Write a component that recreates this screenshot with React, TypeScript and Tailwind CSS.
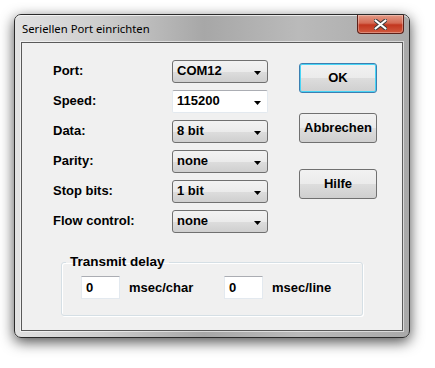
import React from "react";

interface PortRow {
  label: string;
  value: string;
  editable?: boolean;
}

const rows: PortRow[] = [
  { label: "Port:", value: "COM12" },
  { label: "Speed:", value: "115200", editable: true },
  { label: "Data:", value: "8 bit" },
  { label: "Parity:", value: "none" },
  { label: "Stop bits:", value: "1 bit" },
  { label: "Flow control:", value: "none" },
];

const Arrow: React.FC = () => (
  <svg width="7" height="4" viewBox="0 0 7 4" className="absolute right-[6px] top-[10px]">
    <path d="M0 0 H7 L3.5 4 Z" fill="#000" />
  </svg>
);

const Combo: React.FC<{ row: PortRow }> = ({ row }) => (
  <div
    className={
      row.editable
        ? "relative w-[96px] h-[23px] rounded-[2px] border border-[#e3e9ef] border-t-[#abadb3] bg-white pl-[4px] flex items-center"
        : "relative w-[96px] h-[23px] rounded-[3px] border border-[#707070] bg-[linear-gradient(#f2f2f2_0%,#ebebeb_50%,#dddddd_51%,#cfcfcf_100%)] pl-[4px] flex items-center"
    }
  >
    <span>{row.value}</span>
    <Arrow />
  </div>
);

const DlgButton: React.FC<{ label: string; primary?: boolean; className?: string }> = ({
  label,
  primary,
  className,
}) => (
  <button
    className={
      "w-[78px] h-[30px] rounded-[3px] border bg-[linear-gradient(#f2f2f2_0%,#ebebeb_50%,#dddddd_51%,#cfcfcf_100%)] text-center " +
      (primary ? "border-[#3c7fb1] shadow-[inset_0_0_0_1px_#48d4f5] " : "border-[#707070] ") +
      (className || "")
    }
  >
    {label}
  </button>
);

const DelayInput: React.FC<{ value: string }> = ({ value }) => (
  <div className="w-[39px] h-[23px] border border-[#e3e9ef] border-t-[#abadb3] bg-white pl-[4px] flex items-center">
    {value}
  </div>
);

const App: React.FC = () => {
  return (
    <div className="w-[435px] h-[368px] bg-white overflow-hidden pt-[14px] pl-[14px]">
      <div className="w-[396px] h-[324px] rounded-[7px] border border-[#2b2b2b] flex flex-col shadow-[0_4px_14px_rgba(0,0,0,0.7)] bg-[linear-gradient(90deg,#e2e2e2_0%,#cdcdcd_22%,#a7a7a7_48%,#bababa_72%,#a9a9a9_100%)]">
        {/* title bar */}
        <div className="h-[27px] flex justify-between items-start pl-[7px] pr-[5px] shadow-[inset_0_1px_0_rgba(255,255,255,0.7)] rounded-t-[6px]">
          <span className="mt-[6px] text-[11.3px] leading-[16px] text-black [font-family:'Noto_Sans',sans-serif]">
            Seriellen Port einrichten
          </span>
          <div className="w-[47px] h-[19px] rounded-b-[4px] border border-t-0 border-[#5b2019] bg-[linear-gradient(#e39a86_0%,#d46a54_45%,#c2361f_55%,#d15a3f_100%)] flex items-center justify-center shadow-[inset_0_0_0_1px_rgba(255,255,255,0.3)]">
            <svg width="13" height="11" viewBox="0 0 13 11">
              <path
                d="M1 1 L12 10 M12 1 L1 10"
                stroke="#3b3b3b"
                strokeWidth="4"
                strokeLinecap="round"
              />
              <path d="M1.5 1.5 L11.5 9.5 M11.5 1.5 L1.5 9.5" stroke="#fff" strokeWidth="2.2" strokeLinecap="round" />
            </svg>
          </div>
        </div>

        {/* client area */}
        <div className="flex-1 mx-[6px] mb-[6px] border border-[#5a5a5a] shadow-[0_0_0_1px_rgba(255,255,255,0.55)] bg-[#f0f0f0] text-[13px] font-bold text-black [font-family:'Liberation_Sans',Arial,sans-serif] flex flex-col">
          <div className="flex">
            <div className="pl-[31px] pt-[13px] flex flex-col">
              {rows.map((row) => (
                <div key={row.label} className="h-[30px] flex items-center">
                  <span className="w-[119px]">{row.label}</span>
                  <Combo row={row} />
                </div>
              ))}
            </div>
            <div className="ml-[31px] flex flex-col">
              <DlgButton label="OK" primary className="mt-[20px]" />
              <DlgButton label="Abbrechen" className="mt-[20px]" />
              <DlgButton label="Hilfe" className="mt-[26px]" />
            </div>
          </div>

          <fieldset className="ml-[39px] mt-[18px] w-[302px] h-[62px] border border-[#d5dfe5] rounded-[3px] shadow-[inset_1px_1px_0_#fff,1px_1px_0_#fff] pl-[19px]">
            <legend className="ml-[-15px] px-[4px] text-[13.5px] leading-[16px]">Transmit delay</legend>
            <div className="mt-[6px] flex items-center">
              <DelayInput value="0" />
              <span className="ml-[9px] w-[95px]">msec/char</span>
              <DelayInput value="0" />
              <span className="ml-[9px]">msec/line</span>
            </div>
          </fieldset>
        </div>
      </div>
    </div>
  );
};

export default App;
